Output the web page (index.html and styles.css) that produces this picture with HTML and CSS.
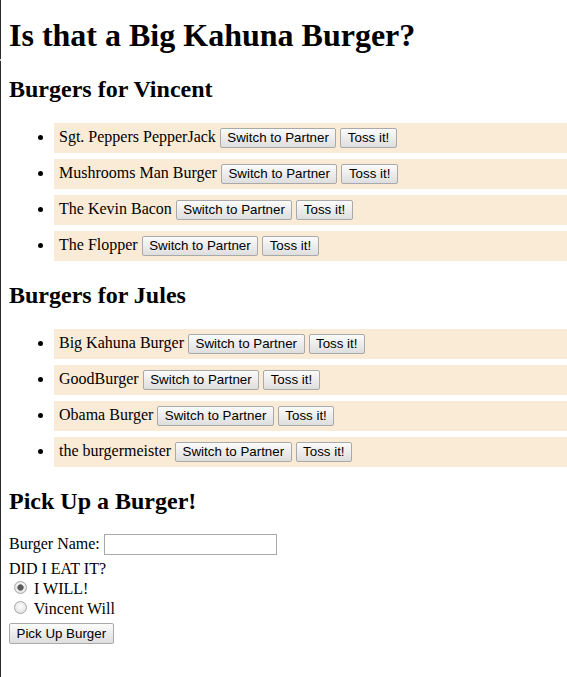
FILE: index.html
```html
<!DOCTYPE html>
<html lang="en">
<head>
<meta charset="utf-8">
<title>Is that a Big Kahuna Burger?</title>
<link rel="stylesheet" href="styles.css">
</head>
<body>
<h1>Is that a Big Kahuna Burger?</h1>

<h2>Burgers for Vincent</h2>
<ul class="burgers">
  <li class="burger">Sgt. Peppers PepperJack <button class="btn">Switch to Partner</button> <button class="btn">Toss it!</button></li>
  <li class="burger">Mushrooms Man Burger <button class="btn">Switch to Partner</button> <button class="btn">Toss it!</button></li>
  <li class="burger">The Kevin Bacon <button class="btn">Switch to Partner</button> <button class="btn">Toss it!</button></li>
  <li class="burger">The Flopper <button class="btn">Switch to Partner</button> <button class="btn">Toss it!</button></li>
</ul>

<h2>Burgers for Jules</h2>
<ul class="burgers">
  <li class="burger">Big Kahuna Burger <button class="btn">Switch to Partner</button> <button class="btn">Toss it!</button></li>
  <li class="burger">GoodBurger <button class="btn">Switch to Partner</button> <button class="btn">Toss it!</button></li>
  <li class="burger">Obama Burger <button class="btn">Switch to Partner</button> <button class="btn">Toss it!</button></li>
  <li class="burger">the burgermeister <button class="btn">Switch to Partner</button> <button class="btn">Toss it!</button></li>
</ul>

<h2>Pick Up a Burger!</h2>
<form class="pick-form">
  <label for="burger-name">Burger Name:</label> <input class="text-input" type="text" id="burger-name"><br>
  DID I EAT IT?<br>
  <input class="radio" type="radio" name="eater" id="r1" checked> <label for="r1">I WILL!</label><br>
  <input class="radio" type="radio" name="eater" id="r2"> <label for="r2">Vincent Will</label><br>
  <button class="btn btn-submit" type="button">Pick Up Burger</button>
</form>
</body>
</html>
```

FILE: styles.css
```css
html {
  min-height: 100%;
  box-sizing: border-box;
  border-style: solid;
  border-width: 0 0 0 1px;
  border-color: #2b2b2b;
  border-image: linear-gradient(#2b2b2b 0 60px, #c8c8c8 60px 62px, #2b2b2b 62px) 1;
}

body {
  margin: 0 0 8px 8px;
  padding-top: 0.1px;
  font-family: "Liberation Serif", "Times New Roman", serif;
  font-size: 16px;
  color: #000;
}

h1 {
  font-size: 32px;
  margin: 16.7px 8px 22.44px 0;
}

h2 {
  font-size: 24px;
  margin: 21px 8px 19.92px 0;
}

.burgers {
  margin: 16px 0;
  padding-left: 40px;
}

.burger {
  background: #faebd7;
  padding: 5px;
  margin: 6px 0 6px 5px;
}

.btn {
  font-family: "Liberation Sans", Arial, sans-serif;
  font-size: 13.333px;
  line-height: 14px;
  color: #000;
  padding: 2px 6.5px;
  border: 1px solid #a9a9a9;
  border-radius: 2px;
  background: linear-gradient(#fbfbfb, #dedede);
  margin: 0;
}

.btn-submit {
  margin-top: 5px;
  padding: 2.5px 6.5px;
}

.pick-form {
  margin: -1px 0 0;
}

.text-input {
  box-sizing: border-box;
  width: 173px;
  height: 21px;
  border: 1px solid #a9a9a9;
  padding: 1px 2px;
  margin: 0 0 5.5px;
  font-family: "Liberation Sans", Arial, sans-serif;
  font-size: 13.333px;
}

.radio {
  appearance: none;
  -webkit-appearance: none;
  box-sizing: border-box;
  width: 13px;
  height: 13px;
  margin: 3px 3px 0 5px;
  border: 1px solid #a6a6a6;
  border-radius: 50%;
  background: radial-gradient(circle at 50% 40%, #fdfdfd, #dcdcdc);
  vertical-align: baseline;
}

.radio:checked {
  background: radial-gradient(circle, #5a5a5a 0 2.5px, #8a8a8a 3px, transparent 3.6px), radial-gradient(circle at 50% 40%, #fdfdfd, #dcdcdc);
}
```
